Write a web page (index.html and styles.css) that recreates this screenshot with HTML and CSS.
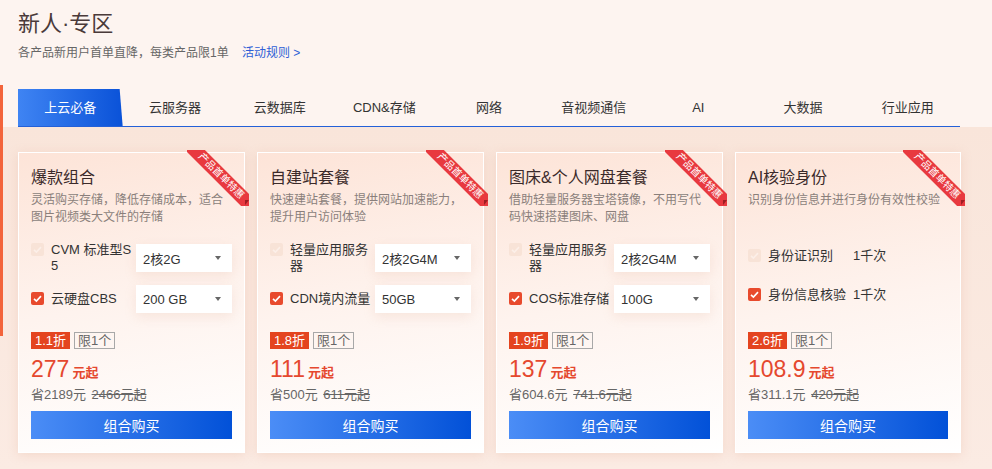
FILE: index.html
```html
<!DOCTYPE html>
<html lang="zh-CN">
<head>
    <meta charset="UTF-8">
    <meta name="viewport" content="width=device-width, initial-scale=1.0">
    <title>新人专区</title>
    <link rel="stylesheet" href="styles.css">
</head>
<body>
    <div class="side-bar"></div>

    <header class="head">
        <h1>新人·专区</h1>
        <p class="sub">各产品新用户首单直降，每类产品限1单 <a class="rule" href="#">活动规则 &gt;</a></p>
    </header>

    <nav class="tabs">
        <a class="tab active" href="#">上云必备</a>
        <a class="tab" href="#">云服务器</a>
        <a class="tab" href="#">云数据库</a>
        <a class="tab" href="#">CDN&amp;存储</a>
        <a class="tab" href="#">网络</a>
        <a class="tab" href="#">音视频通信</a>
        <a class="tab" href="#">AI</a>
        <a class="tab" href="#">大数据</a>
        <a class="tab" href="#">行业应用</a>
    </nav>

    <section class="panel">
        <div class="cards">

            <div class="card">
                <div class="ribbon"><span>产品首单特惠</span></div>
                <h3>爆款组合</h3>
                <p class="desc">灵活购买存储，降低存储成本，适合图片视频类大文件的存储</p>
                <div class="opts">
                    <div class="row">
                        <div class="opt">
                            <span class="cb off"><svg viewBox="0 0 13 13"><path d="M3 6.8l2.4 2.3 4.6-5"/></svg></span>
                            <span class="lbl">CVM 标准型S5</span>
                        </div>
                        <div class="sel">2核2G</div>
                    </div>
                    <div class="row">
                        <div class="opt">
                            <span class="cb on"><svg viewBox="0 0 13 13"><path d="M3 6.8l2.4 2.3 4.6-5"/></svg></span>
                            <span class="lbl">云硬盘CBS</span>
                        </div>
                        <div class="sel">200 GB</div>
                    </div>
                </div>
                <div class="foot">
                    <div class="tags"><span class="disc">1.1折</span><span class="lim">限1个</span></div>
                    <div class="price">277<small>元起</small></div>
                    <div class="save">省2189元 <s>2466元起</s></div>
                    <button class="buy">组合购买</button>
                </div>
            </div>

            <div class="card">
                <div class="ribbon"><span>产品首单特惠</span></div>
                <h3>自建站套餐</h3>
                <p class="desc">快速建站套餐，提供网站加速能力，提升用户访问体验</p>
                <div class="opts">
                    <div class="row">
                        <div class="opt">
                            <span class="cb off"><svg viewBox="0 0 13 13"><path d="M3 6.8l2.4 2.3 4.6-5"/></svg></span>
                            <span class="lbl">轻量应用服务器</span>
                        </div>
                        <div class="sel">2核2G4M</div>
                    </div>
                    <div class="row">
                        <div class="opt">
                            <span class="cb on"><svg viewBox="0 0 13 13"><path d="M3 6.8l2.4 2.3 4.6-5"/></svg></span>
                            <span class="lbl">CDN境内流量</span>
                        </div>
                        <div class="sel">50GB</div>
                    </div>
                </div>
                <div class="foot">
                    <div class="tags"><span class="disc">1.8折</span><span class="lim">限1个</span></div>
                    <div class="price">111<small>元起</small></div>
                    <div class="save">省500元 <s>611元起</s></div>
                    <button class="buy">组合购买</button>
                </div>
            </div>

            <div class="card">
                <div class="ribbon"><span>产品首单特惠</span></div>
                <h3>图床&amp;个人网盘套餐</h3>
                <p class="desc">借助轻量服务器宝塔镜像，不用写代码快速搭建图床、网盘</p>
                <div class="opts">
                    <div class="row">
                        <div class="opt">
                            <span class="cb off"><svg viewBox="0 0 13 13"><path d="M3 6.8l2.4 2.3 4.6-5"/></svg></span>
                            <span class="lbl">轻量应用服务器</span>
                        </div>
                        <div class="sel">2核2G4M</div>
                    </div>
                    <div class="row">
                        <div class="opt">
                            <span class="cb on"><svg viewBox="0 0 13 13"><path d="M3 6.8l2.4 2.3 4.6-5"/></svg></span>
                            <span class="lbl">COS标准存储</span>
                        </div>
                        <div class="sel">100G</div>
                    </div>
                </div>
                <div class="foot">
                    <div class="tags"><span class="disc">1.9折</span><span class="lim">限1个</span></div>
                    <div class="price">137<small>元起</small></div>
                    <div class="save">省604.6元 <s>741.6元起</s></div>
                    <button class="buy">组合购买</button>
                </div>
            </div>

            <div class="card">
                <div class="ribbon"><span>产品首单特惠</span></div>
                <h3>AI核验身份</h3>
                <p class="desc">识别身份信息并进行身份有效性校验</p>
                <div class="opts">
                    <div class="row">
                        <div class="opt">
                            <span class="cb off"><svg viewBox="0 0 13 13"><path d="M3 6.8l2.4 2.3 4.6-5"/></svg></span>
                            <span class="lbl">身份证识别</span>
                        </div>
                        <div class="qty">1千次</div>
                    </div>
                    <div class="row">
                        <div class="opt">
                            <span class="cb on"><svg viewBox="0 0 13 13"><path d="M3 6.8l2.4 2.3 4.6-5"/></svg></span>
                            <span class="lbl">身份信息核验</span>
                        </div>
                        <div class="qty">1千次</div>
                    </div>
                </div>
                <div class="foot">
                    <div class="tags"><span class="disc">2.6折</span><span class="lim">限1个</span></div>
                    <div class="price">108.9<small>元起</small></div>
                    <div class="save">省311.1元 <s>420元起</s></div>
                    <button class="buy">组合购买</button>
                </div>
            </div>

        </div>
    </section>
</body>
</html>
```

FILE: styles.css
```css
body {
    margin: 0;
    font-family: "Liberation Sans", "Noto Sans CJK SC", sans-serif;
    background-color: #fdf4f0;
    color: #333;
}
.side-bar {
    position: absolute;
    left: 0;
    top: 85px;
    width: 3px;
    height: 251px;
    background: #f3643b;
}
.head {
    padding: 8px 18px 0;
}
.head h1 {
    margin: 0;
    font-size: 22px;
    line-height: 32px;
    font-weight: normal;
    color: #4a3a3a;
}
.sub {
    margin: 4px 0 0;
    font-size: 12px;
    line-height: 18px;
    color: #666;
}
.rule {
    margin-left: 10px;
    color: #2f5fd6;
    text-decoration: none;
}
.tabs {
    width: 942px;
    margin: 27px 0 0 18px;
    display: grid;
    grid-template-columns: repeat(9, 1fr);
    border-bottom: 1px solid #2360d8;
}
.tab {
    height: 37px;
    line-height: 37px;
    text-align: center;
    font-size: 13px;
    color: #333;
    text-decoration: none;
}
.tab.active {
    color: #fff;
    background: linear-gradient(90deg, #3f84f3, #0a52d8);
    clip-path: polygon(0 0, calc(100% - 3px) 0, 100% 100%, 0 100%);
}
.panel {
    padding: 25px 0 16px 18px;
    background: linear-gradient(180deg, #f9e5da, #fbebe3);
}
.cards {
    width: 943px;
    display: grid;
    grid-template-columns: repeat(4, 1fr);
    gap: 12px;
}
.card {
    position: relative;
    height: 301px;
    box-sizing: border-box;
    padding: 13px 12px;
    display: flex;
    flex-direction: column;
    border: 1px solid #fff;
    background: linear-gradient(170deg, #fde4d8 0%, #fef3ee 50%, #fff 100%);
    box-shadow: 0 2px 10px rgba(225, 160, 130, 0.25);
}
.card::after {
    content: "";
    position: absolute;
    right: -5px;
    top: 47px;
    border-left: 4px solid #9e1d22;
    border-bottom: 5px solid transparent;
}
.ribbon {
    position: absolute;
    top: -3px;
    right: -5px;
    width: 62px;
    height: 56px;
    overflow: hidden;
}
.ribbon span {
    position: absolute;
    left: -16px;
    top: 19px;
    width: 100px;
    height: 14px;
    line-height: 14px;
    background: #e8393f;
    color: #fff;
    font-size: 10px;
    text-align: center;
    transform: rotate(45deg);
}
.card h3 {
    margin: 0;
    font-size: 16px;
    line-height: 24px;
    font-weight: normal;
    color: #3b2a2a;
}
.desc {
    margin: 2px 0 0;
    height: 34px;
    font-size: 12px;
    line-height: 17px;
    color: #8a7f7b;
}
.opts {
    margin-top: 16px;
}
.row {
    display: flex;
    align-items: center;
}
.row + .row {
    margin-top: 11px;
}
.opt {
    width: 102px;
    display: flex;
    align-items: flex-start;
}
.cb {
    flex: none;
    width: 13px;
    height: 13px;
    margin: 1px 7px 0 0;
    border-radius: 2px;
}
.cb svg {
    display: block;
    width: 13px;
    height: 13px;
    fill: none;
    stroke-width: 1.6;
}
.cb.off {
    background: #f8e3d7;
}
.cb.off svg {
    stroke: #fcefe8;
}
.cb.on {
    background: #e84a2d;
}
.cb.on svg {
    stroke: #fff;
}
.lbl {
    width: 82px;
    font-size: 13px;
    line-height: 16px;
    word-break: break-all;
    color: #333;
}
.sel {
    margin-left: 3px;
    width: 96px;
    height: 28px;
    box-sizing: border-box;
    padding: 0 11px 0 7px;
    display: flex;
    justify-content: space-between;
    align-items: center;
    background: #fff;
    font-size: 13px;
    color: #333;
    box-shadow: 0 4px 12px rgba(215, 160, 135, 0.18);
}
.sel::after {
    content: "";
    border-top: 4px solid #666;
    border-left: 3px solid transparent;
    border-right: 3px solid transparent;
}
.qty {
    margin-left: 3px;
    font-size: 13px;
    line-height: 28px;
    color: #333;
}
.foot {
    margin-top: auto;
}
.tags {
    display: flex;
    gap: 4px;
}
.disc {
    padding: 0 4px;
    line-height: 17px;
    font-size: 13px;
    color: #fff;
    background: #e4441f;
}
.lim {
    padding: 0 3px;
    line-height: 15px;
    font-size: 13px;
    color: #666;
    border: 1px solid #a8a8a8;
}
.price {
    margin-top: 7px;
    font-size: 23px;
    line-height: 26px;
    color: #e5482e;
}
.price small {
    margin-left: 3px;
    font-size: 13px;
    font-weight: bold;
}
.save {
    margin-top: 1px;
    font-size: 13px;
    line-height: 16px;
    color: #666;
}
.save s {
    margin-left: 2px;
}
.buy {
    margin-top: 8px;
    width: 100%;
    height: 28px;
    border: none;
    background: linear-gradient(90deg, #4b8df6, #0251d8);
    color: #fff;
    font-family: inherit;
    font-size: 14px;
    cursor: pointer;
}
```
